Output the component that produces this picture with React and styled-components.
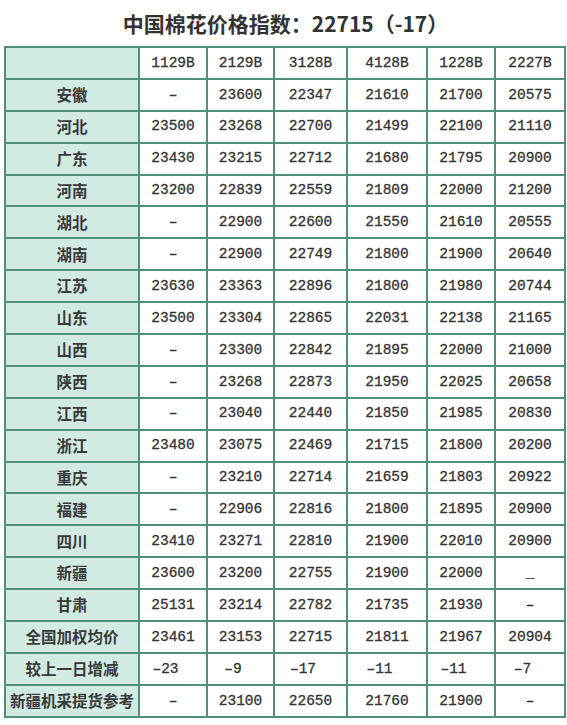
import React from "react";
import styled, { createGlobalStyle } from "styled-components";

const Global = createGlobalStyle`
    body {
        margin: 0;
        background: #fff;
    }
`

const Page = styled.div`
    width: 567px;
    padding: 0 4px;
    box-sizing: border-box;
`

const Title = styled.h1`
    margin: 0;
    height: 46px;
    display: flex;
    align-items: center;
    justify-content: center;
    font-family: "Noto Sans CJK SC", "Noto Sans", sans-serif;
    font-weight: 700;
    font-size: 21px;
    color: #333;
    padding-left: 4px;
`

const Table = styled.table`
    border-collapse: collapse;
    table-layout: fixed;
    width: 560px;
    color: #333;
`

const Row = styled.tr`
    height: 31.9px;
`

const Cell = styled.td`
    border: 2px solid #4f8f7c;
    padding: 0;
    padding-right: ${p => p.$shift ? "15px" : "0"};
    text-align: center;
    vertical-align: middle;
    font-family: "Liberation Mono", "Noto Sans CJK SC", monospace;
    font-size: 14.5px;
    line-height: 1;
    color: #333;
    -webkit-text-stroke: 0.3px #333;
`

const Label = styled(Cell)`
    background: #d1eae2;
    font-family: "Noto Sans CJK SC", sans-serif;
    font-weight: 700;
    font-size: 15.5px;
    color: #3a3a3a;
    -webkit-text-stroke: 0;
`

const columns = ["1129B", "2129B", "3128B", "4128B", "1228B", "2227B"]
const widths = [134, 68, 67, 73, 80, 68, 70]

const rows = [
    ["安徽", "–", "23600", "22347", "21610", "21700", "20575"],
    ["河北", "23500", "23268", "22700", "21499", "22100", "21110"],
    ["广东", "23430", "23215", "22712", "21680", "21795", "20900"],
    ["河南", "23200", "22839", "22559", "21809", "22000", "21200"],
    ["湖北", "–", "22900", "22600", "21550", "21610", "20555"],
    ["湖南", "–", "22900", "22749", "21800", "21900", "20640"],
    ["江苏", "23630", "23363", "22896", "21800", "21980", "20744"],
    ["山东", "23500", "23304", "22865", "22031", "22138", "21165"],
    ["山西", "–", "23300", "22842", "21895", "22000", "21000"],
    ["陕西", "–", "23268", "22873", "21950", "22025", "20658"],
    ["江西", "–", "23040", "22440", "21850", "21985", "20830"],
    ["浙江", "23480", "23075", "22469", "21715", "21800", "20200"],
    ["重庆", "–", "23210", "22714", "21659", "21803", "20922"],
    ["福建", "–", "22906", "22816", "21800", "21895", "20900"],
    ["四川", "23410", "23271", "22810", "21900", "22010", "20900"],
    ["新疆", "23600", "23200", "22755", "21900", "22000", "_"],
    ["甘肃", "25131", "23214", "22782", "21735", "21930", "–"],
    ["全国加权均价", "23461", "23153", "22715", "21811", "21967", "20904"],
    ["较上一日增减", "–23", "–9", "–17", "–11", "–11", "–7"],
    ["新疆机采提货参考", "–", "23100", "22650", "21760", "21900", "–"],
]

const App = () => {
    return (
        <Page>
            <Global />
            <Title>中国棉花价格指数：22715（-17）</Title>
            <Table>
                <colgroup>
                    {widths.map((w, i) => <col key={i} style={{ width: w }} />)}
                </colgroup>
                <tbody>
                    <Row>
                        <Label />
                        {columns.map(c => <Cell key={c}>{c}</Cell>)}
                    </Row>
                    {rows.map(r => {
                        // the daily change row sits a little left of centre
                        const delta = r[0] === "较上一日增减"
                        return (
                            <Row key={r[0]}>
                                <Label>{r[0]}</Label>
                                {r.slice(1).map((v, i) => <Cell key={i} $shift={delta}>{v}</Cell>)}
                            </Row>
                        )
                    })}
                </tbody>
            </Table>
        </Page>
    )
}

export default App;
